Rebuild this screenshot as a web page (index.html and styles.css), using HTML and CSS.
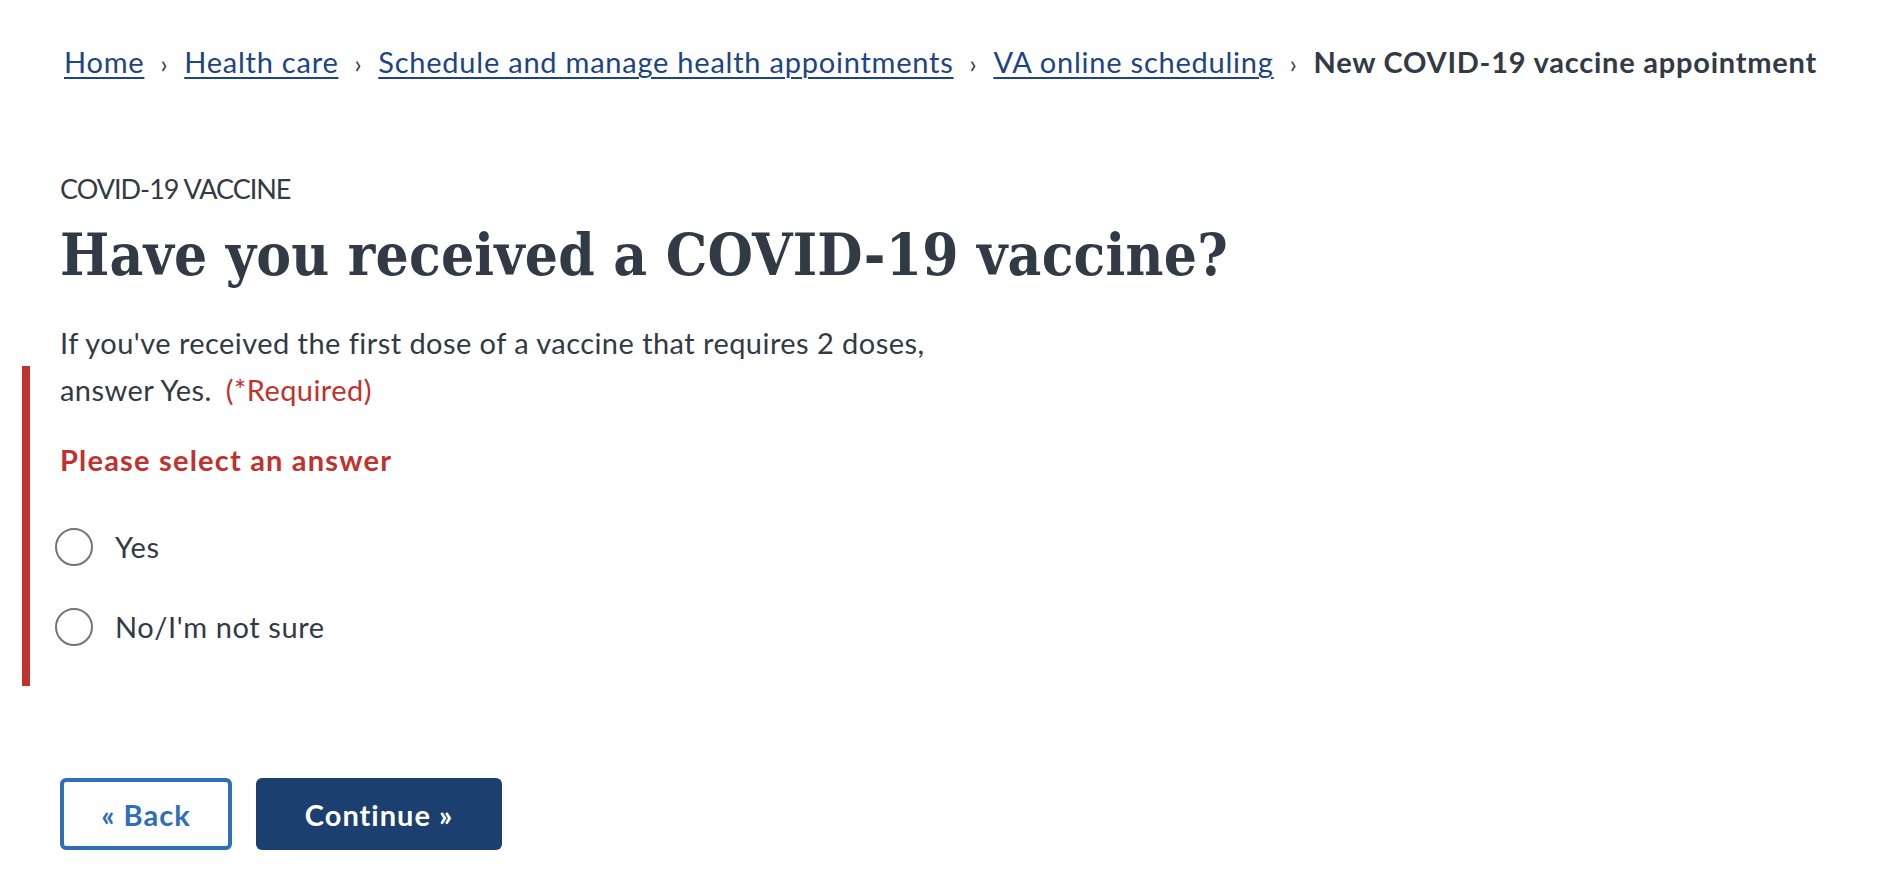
FILE: index.html
```html
<!DOCTYPE html>
<html lang="en">
<head>
<meta charset="utf-8">
<title>New COVID-19 vaccine appointment</title>
<link rel="stylesheet" href="styles.css">
</head>
<body>
<nav class="breadcrumbs" aria-label="Breadcrumb">
  <ol class="crumb-list">
    <li class="crumb"><a href="#">Home</a></li>
    <li class="crumb"><a href="#">Health care</a></li>
    <li class="crumb"><a href="#">Schedule and manage health appointments</a></li>
    <li class="crumb"><a href="#">VA online scheduling</a></li>
    <li class="crumb current">New COVID-19 vaccine appointment</li>
  </ol>
</nav>
<main class="page">
  <p class="eyebrow">COVID-19 VACCINE</p>
  <h1 class="title">Have you received a COVID-19 vaccine?</h1>
  <fieldset class="error-field">
    <legend class="question">If you've received the first dose of a vaccine that requires 2 doses, answer Yes. <span class="required">(*Required)</span></legend>
    <p class="error-msg">Please select an answer</p>
    <div class="radio-list">
      <label class="radio"><input type="radio" name="received"><span class="circle"></span><span class="radio-text">Yes</span></label>
      <label class="radio"><input type="radio" name="received"><span class="circle"></span><span class="radio-text">No/I'm not sure</span></label>
    </div>
  </fieldset>
  <div class="actions">
    <button class="btn btn-back" type="button">« Back</button>
    <button class="btn btn-continue" type="button">Continue »</button>
  </div>
</main>
</body>
</html>
```
FILE: styles.css
```css
* { box-sizing: border-box; }
html, body { margin: 0; padding: 0; background: #fff; }
body {
  font-family: Lato, "Noto Sans", sans-serif;
  color: #323a45;
  font-size: 29px;
  letter-spacing: 0.6px;
  line-height: 1.5;
}
.breadcrumbs { padding: 40px 0 0 64px; }
.crumb-list {
  list-style: none;
  margin: 0;
  padding: 0;
  display: flex;
  flex-wrap: wrap;
  font-size: 29px;
  letter-spacing: 0.77px;
  line-height: 43px;
}
.crumb a { color: #1d4485; text-decoration: underline; text-underline-offset: 4px; text-decoration-thickness: 2px; }
.crumb:not(:last-child)::after {
  content: "›";
  display: inline-block;
  margin: 0 16px;
  color: #323a45;
  font-size: 25px;
}
.crumb.current { font-weight: 700; color: #323a45; }
.page { padding: 0 0 0 60px; }
.eyebrow {
  margin: 83px 0 0;
  font-size: 27px;
  letter-spacing: -1px;
  line-height: 42px;
}
.title {
  margin: 12px 0 0;
  font-family: "DejaVu Serif Condensed", "DejaVu Serif", serif;
  font-stretch: condensed;
  font-weight: 700;
  font-size: 58px;
  letter-spacing: 0.2px;
  line-height: 67px;
  color: #323a45;
}
.error-field {
  margin: 30px 0 0 -38px;
  padding: 0 0 38px 30px;
  border: none;
  border-left: 8px solid #c1312d;
  min-width: 0;
}
.question {
  padding: 0;
  max-width: 910px;
  font-size: 29px;
  letter-spacing: 0.45px;
  line-height: 47px;
}
.required { color: #c1312d; margin-left: 6px; }
.error-msg {
  margin: 26px 0 0;
  font-weight: 700;
  letter-spacing: 1.2px;
  color: #c1312d;
  line-height: 42px;
}
.radio-list {
  margin-top: 45px;
  display: flex;
  flex-direction: column;
  gap: 38px;
}
.radio {
  display: flex;
  align-items: center;
  line-height: 42px;
  cursor: pointer;
}
.radio input { position: absolute; opacity: 0; width: 1px; height: 1px; }
.circle {
  width: 38px;
  height: 38px;
  border: 2px solid #757575;
  border-radius: 50%;
  margin-left: -5px;
  margin-right: 22px;
  flex: none;
}
.actions {
  margin-top: 92px;
  display: flex;
  gap: 24px;
}
.btn {
  height: 72px;
  font-family: Lato, "Noto Sans", sans-serif;
  font-weight: 700;
  font-size: 29px;
  letter-spacing: 1px;
  border-radius: 6px;
  cursor: pointer;
}
.btn-back {
  width: 172px;
  background: #fff;
  color: #2f6fb6;
  border: 4px solid #2f6fb6;
}
.btn-continue {
  width: 246px;
  background: #1b3f6e;
  color: #fff;
  border: none;
}
```
